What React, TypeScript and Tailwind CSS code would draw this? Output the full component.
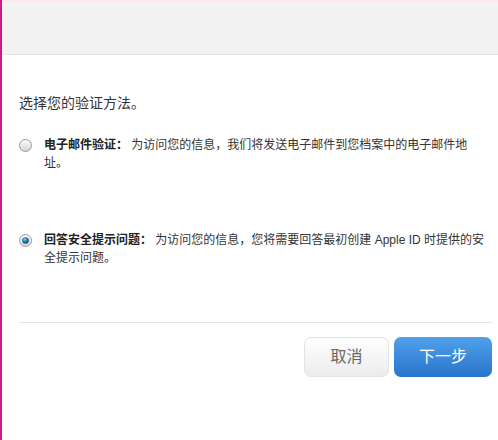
const Radio = ({ checked }: { checked?: boolean }) => (
  <svg width="13" height="13" viewBox="0 0 13 13" className="shrink-0 mt-[3px]">
    <defs>
      <linearGradient id={checked ? "rg-on" : "rg-off"} x1="0" y1="0" x2="0" y2="1">
        <stop offset="0" stopColor="#fdfdfd" />
        <stop offset="1" stopColor="#d4d4d4" />
      </linearGradient>
      <radialGradient id="dot" cx="0.4" cy="0.35" r="0.7">
        <stop offset="0" stopColor="#8fd0f5" />
        <stop offset="0.5" stopColor="#1f78b8" />
        <stop offset="1" stopColor="#0d3e6a" />
      </radialGradient>
    </defs>
    <circle cx="6.5" cy="6.5" r="6" fill={`url(#${checked ? "rg-on" : "rg-off"})`} stroke="#9a9a9a" strokeWidth="1" />
    {checked && <circle cx="6.5" cy="6.5" r="3.3" fill="url(#dot)" />}
  </svg>
);

const Option = ({
  checked,
  label,
  first,
  rest,
}: {
  checked?: boolean;
  label: string;
  first: string;
  rest: string;
}) => (
  <div className="flex items-start gap-[12px]">
    <Radio checked={checked} />
    <div className="flex-1 text-[12px] leading-[18px] text-[#333] whitespace-nowrap">
      <p>
        <span className="font-bold text-[#222]">{label}</span> {first}
      </p>
      <p>{rest}</p>
    </div>
  </div>
);

export default function App() {
  return (
    <div
      className="min-h-screen bg-white border-l-2 border-[#c91a8e]"
      style={{ fontFamily: '"Liberation Sans", "Noto Sans CJK SC", sans-serif' }}
    >
      {/* header */}
      <div className="h-[2px] bg-[#fbe7f3]" />
      <div className="h-[53px] bg-[#f2f2f2] border-b border-[#e3e3e3]" />

      {/* content */}
      <div className="pl-[17px] pr-[6px]">
        <h2 className="mt-[38px] text-[14px] leading-[20px] text-[#333] font-normal">
          选择您的验证方法。
        </h2>

        <div className="mt-[23px]">
          <Option
            label="电子邮件验证："
            first="为访问您的信息，我们将发送电子邮件到您档案中的电子邮件地"
            rest="址。"
          />
        </div>

        <div className="mt-[59px]">
          <Option
            checked
            label="回答安全提示问题："
            first="为访问您的信息，您将需要回答最初创建 Apple ID 时提供的安"
            rest="全提示问题。"
          />
        </div>

        <div className="mt-[55px] h-px bg-[#e5e5e5]" />

        <div className="mt-[14px] flex justify-end gap-[5px]">
          <button className="w-[85px] h-[40px] rounded-[7px] border border-[#e2e2e2] bg-gradient-to-b from-white to-[#ececec] text-[16px] text-[#666]">
            取消
          </button>
          <button className="w-[98px] h-[40px] rounded-[7px] bg-gradient-to-b from-[#4fa1ea] to-[#2a74cc] text-[16px] text-white">
            下一步
          </button>
        </div>
      </div>
    </div>
  );
}
